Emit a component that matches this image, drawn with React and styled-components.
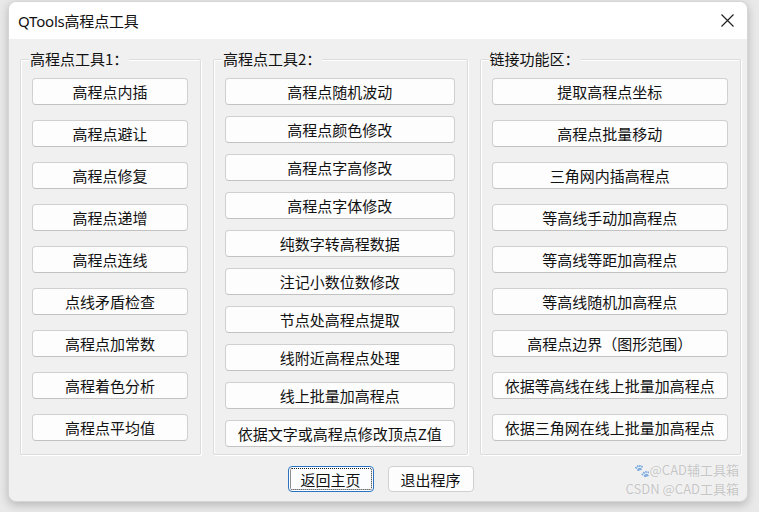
import React from 'react'
import styled, { createGlobalStyle } from 'styled-components'

const GlobalStyle = createGlobalStyle`
  html, body {
    margin: 0;
    padding: 0;
    background: #e9e9e9;
  }
  body {
    font-family: "Noto Sans", "Noto Sans CJK SC", sans-serif;
  }
`

const Page = styled.div`
  width: 759px;
  height: 512px;
  box-sizing: border-box;
  padding: 1px 11px 10px 8px;
  overflow: hidden;
`

const Window = styled.div`
  position: relative;
  width: 740px;
  height: 501px;
  border-radius: 8px;
  overflow: hidden;
  border: 1px solid #d6d6d6;
  box-sizing: border-box;
  box-shadow: 0 3px 10px rgba(0, 0, 0, 0.22);
  display: flex;
  flex-direction: column;
  background: #f0f0f0;
`

const TitleBar = styled.div`
  height: 37px;
  flex: none;
  background: #fff;
  display: flex;
  align-items: center;
  justify-content: space-between;
  padding: 0 13px 0 9px;
`

const Title = styled.div`
  font-size: 15px;
  color: #111;
  letter-spacing: -0.2px;
`

const CloseIcon = styled.svg`
  width: 13px;
  height: 13px;
`

const Body = styled.div`
  flex: 1;
  display: flex;
  flex-direction: column;
  padding: 20px 6px 0 11px;
`

const Groups = styled.div`
  display: flex;
  gap: 11px;
`

const Group = styled.div`
  position: relative;
  width: ${p => p.$w}px;
  height: 396px;
  box-sizing: border-box;
  border: 1px solid #dcdcdc;
  box-shadow: inset 1px 1px 0 #fff, 1px 1px 0 #fff;
  border-radius: 2px;
  padding: 18px 12px 0 11px;
  display: flex;
  flex-direction: column;
  gap: ${p => p.$gap}px;
  & + & {
    margin-left: ${p => p.$ml || 0}px;
  }
`

const Legend = styled.div`
  position: absolute;
  top: -11px;
  left: 8px;
  padding: 0 1px;
  background: #f0f0f0;
  font-family: "Noto Sans CJK SC", sans-serif;
  font-size: 15px;
  line-height: 20px;
  color: #111;
`

const Button = styled.div`
  height: 27px;
  flex: none;
  box-sizing: border-box;
  background: #fdfdfd;
  border: 1px solid #d0d0d0;
  border-bottom-color: #c2c2c2;
  border-radius: 4px;
  display: flex;
  align-items: center;
  justify-content: center;
  font-family: "Noto Sans CJK SC", sans-serif;
  font-size: 15px;
  color: #111;
  white-space: nowrap;
`

const Footer = styled.div`
  display: flex;
  justify-content: center;
  gap: 14px;
  padding: 11px 0 0 0;
`

const FooterButton = styled(Button)`
  width: 86px;
  height: 26px;
  position: relative;
  border-color: ${p => (p.$focused ? '#2b73c0' : '#d0d0d0')};
  background: ${p => (p.$focused ? '#fbfdff' : '#fdfdfd')};
  &::after {
    content: '';
    display: ${p => (p.$focused ? 'block' : 'none')};
    position: absolute;
    inset: 1px;
    border: 1px dotted #222;
    border-radius: 2px;
  }
`

const Watermark = styled.div`
  position: absolute;
  right: 8px;
  bottom: 3px;
  text-align: right;
  font-family: "Noto Sans CJK SC", sans-serif;
  font-size: 13px;
  line-height: 19px;
  color: rgba(150, 150, 150, 0.55);
  text-shadow: 0 0 1px #fff;
  pointer-events: none;
`

const group1 = ['高程点内插', '高程点避让', '高程点修复', '高程点递增', '高程点连线', '点线矛盾检查', '高程点加常数', '高程着色分析', '高程点平均值']
const group2 = ['高程点随机波动', '高程点颜色修改', '高程点字高修改', '高程点字体修改', '纯数字转高程数据', '注记小数位数修改', '节点处高程点提取', '线附近高程点处理', '线上批量加高程点', '依据文字或高程点修改顶点Z值']
const group3 = ['提取高程点坐标', '高程点批量移动', '三角网内插高程点', '等高线手动加高程点', '等高线等距加高程点', '等高线随机加高程点', '高程点边界（图形范围）', '依据等高线在线上批量加高程点', '依据三角网在线上批量加高程点']

const App = () => (
  <Page>
    <GlobalStyle />
    <Window>
      <TitleBar>
        <Title>QTools高程点工具</Title>
        <CloseIcon viewBox="0 0 13 13">
          <path d="M0.5 0.5 L12.5 12.5 M12.5 0.5 L0.5 12.5" stroke="#222" strokeWidth="1.2" fill="none" />
        </CloseIcon>
      </TitleBar>
      <Body>
        <Groups>
          <Group $w={182} $gap={15}>
            <Legend>高程点工具1：</Legend>
            {group1.map(t => <Button key={t}>{t}</Button>)}
          </Group>
          <Group $w={256} $gap={11}>
            <Legend>高程点工具2：</Legend>
            {group2.map(t => <Button key={t}>{t}</Button>)}
          </Group>
          <Group $w={263} $gap={15} $ml={1}>
            <Legend>链接功能区：</Legend>
            {group3.map(t => <Button key={t}>{t}</Button>)}
          </Group>
        </Groups>
        <Footer>
          <FooterButton $focused>返回主页</FooterButton>
          <FooterButton>退出程序</FooterButton>
        </Footer>
      </Body>
      <Watermark>
        🐾@CAD辅工具箱
        <br />
        CSDN @CAD工具箱
      </Watermark>
    </Window>
  </Page>
)

export default App
